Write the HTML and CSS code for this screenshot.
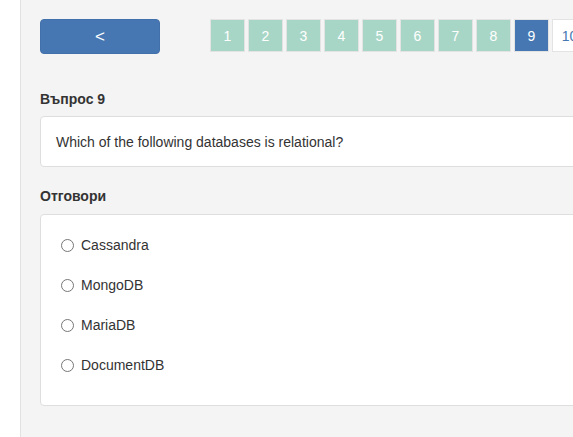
FILE: index.html
```html
<!DOCTYPE html>
<html>
<head>
<meta charset="utf-8">
<link rel="stylesheet" href="styles.css">
</head>
<body>
<div class="layout">
  <aside class="sidebar"></aside>
  <main class="main">
    <div class="topbar">
      <button class="prev-btn">&lt;</button>
      <nav class="pager">
        <span class="page done">1</span>
        <span class="page done">2</span>
        <span class="page done">3</span>
        <span class="page done">4</span>
        <span class="page done">5</span>
        <span class="page done">6</span>
        <span class="page done">7</span>
        <span class="page done">8</span>
        <span class="page active">9</span>
        <span class="page">10</span>
      </nav>
    </div>

    <h3 class="label">Въпрос 9</h3>
    <div class="card question">Which of the following databases is relational?</div>

    <h3 class="label">Отговори</h3>
    <div class="card answers">
      <label class="answer"><input type="radio" name="a" class="radio"><span>Cassandra</span></label>
      <label class="answer"><input type="radio" name="a" class="radio"><span>MongoDB</span></label>
      <label class="answer"><input type="radio" name="a" class="radio"><span>MariaDB</span></label>
      <label class="answer"><input type="radio" name="a" class="radio"><span>DocumentDB</span></label>
    </div>
  </main>
</div>
</body>
</html>
```

FILE: styles.css
```css
html, body {
  margin: 0;
  padding: 0;
  height: 100%;
  overflow: hidden;
  background: #f4f4f4;
}
body {
  font-family: "Liberation Sans", Arial, sans-serif;
  font-size: 14px;
  color: #333;
}
.layout {
  display: flex;
  min-height: 100%;
}
.sidebar {
  width: 20px;
  flex-shrink: 0;
  background: #fff;
  border-right: 1px solid #e2e2e2;
}
.main {
  width: 620px;
  flex-shrink: 0;
  padding: 19px 0 0 19px;
}
.topbar {
  display: flex;
  align-items: flex-start;
  gap: 50px;
}
.prev-btn {
  width: 120px;
  height: 35px;
  flex-shrink: 0;
  background: #4677b2;
  border: 1px solid #4170aa;
  border-radius: 4px;
  color: #fff;
  font-family: "Liberation Sans", Arial, sans-serif;
  font-size: 17px;
  padding: 0;
  line-height: 33px;
}
.pager {
  display: flex;
  gap: 3px;
  flex-shrink: 0;
}
.page {
  box-sizing: border-box;
  width: 35px;
  height: 33px;
  border: 1px solid #e3e3e3;
  background: #fff;
  color: #4677b2;
  display: flex;
  align-items: center;
  justify-content: center;
  font-size: 14px;
}
.page.done {
  background: #a8d6c6;
  color: #fff;
}
.page.active {
  background: #4677b2;
  color: #fff;
}
.label {
  margin: 35px 0 7px;
  font-size: 14px;
  line-height: 20px;
  font-weight: bold;
  color: #333;
}
.card {
  background: #fff;
  border: 1px solid #dedede;
  border-radius: 4px;
}
.question {
  padding: 15px 15px 14px;
  line-height: 20px;
  margin-bottom: 19px;
}
.question + .label {
  margin-top: 0;
  margin-bottom: 8px;
}
.answers {
  padding: 10px 0 20px;
  display: flex;
  flex-direction: column;
}
.answer {
  height: 40px;
  display: flex;
  align-items: center;
  padding-left: 20px;
  gap: 7px;
  line-height: 20px;
}
.radio {
  appearance: none;
  -webkit-appearance: none;
  margin: 0;
  width: 13px;
  height: 13px;
  box-sizing: border-box;
  border: 1px solid #767676;
  border-radius: 50%;
  background: #fff;
}
```
